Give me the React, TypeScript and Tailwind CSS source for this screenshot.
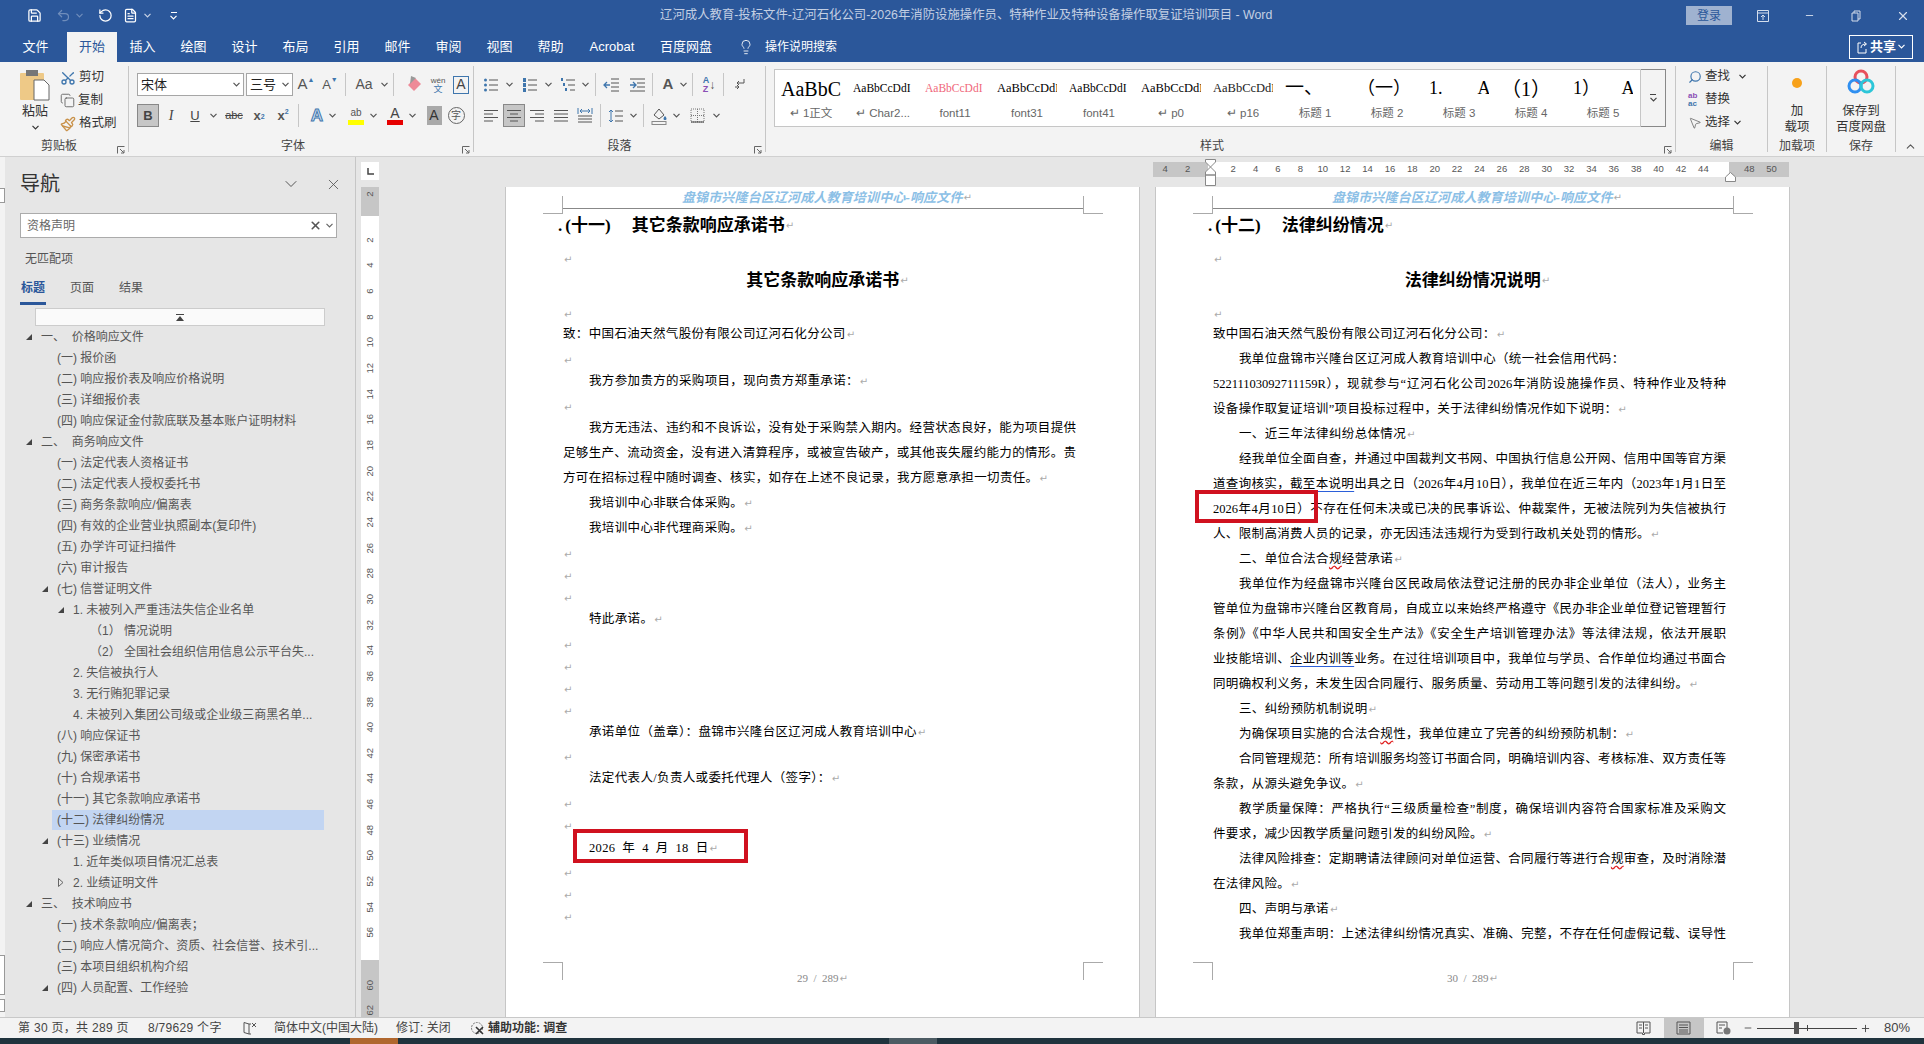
import type { ReactNode } from "react";
import {
  ChevronDown,
  Copy,
  FileText,
  Lightbulb,
  Minus,
  MousePointer2,
  Paintbrush,
  Plus,
  RotateCw,
  Save,
  Scissors,
  Search,
  Undo2,
  X,
} from "lucide-react";

const SERIF = "font-['Liberation_Serif','Noto_Sans_CJK_SC',serif]";

function Caret({ className = "text-[#555]" }: { className?: string }) {
  return (
    <svg width="7" height="5" viewBox="0 0 7 5" className={className}>
      <path d="M0.5 0.8 L3.5 3.8 L6.5 0.8" fill="none" stroke="currentColor" strokeWidth="1.2" />
    </svg>
  );
}

function Launcher() {
  return (
    <svg width="8" height="8" viewBox="0 0 8 8" className="text-[#666]">
      <path d="M0.5 7.5V0.5H7.5M3 3L7 7M7 4V7H4" fill="none" stroke="currentColor" />
    </svg>
  );
}

function Lines({ rows, color = "#555" }: { rows: [number, number][]; color?: string }) {
  return (
    <svg width="16" height="16" viewBox="0 0 16 16">
      {rows.map(([a, b], i) => (
        <path key={i} d={`M${a} ${2.5 + i * 3.5}H${b}`} stroke={color} strokeWidth="1" />
      ))}
    </svg>
  );
}

function Cell({ className, children }: { className: string; children?: ReactNode }) {
  return <div className={`flex h-[23px] shrink-0 items-center justify-center ${className}`}>{children}</div>;
}

function Sep({ className = "" }: { className?: string }) {
  return <div className={`h-[23px] w-px shrink-0 bg-[#c6c6c6] ${className}`} />;
}

function GroupLabel({ children, className = "" }: { children: ReactNode; className?: string }) {
  return (
    <div className={`relative mb-px flex h-[18px] items-center justify-center text-[12px] text-[#444] ${className}`}>
      {children}
    </div>
  );
}

function RibbonSep() {
  return <div className="my-[4px] h-[86px] w-px shrink-0 bg-[#c6c6c6]" />;
}

function TitleBar() {
  return (
    <div className="flex h-[31px] shrink-0 items-center bg-[#2b579a]">
      <div className="flex w-[660px] shrink-0 items-center">
        <Save size={15} className="ml-[27px] text-white" />
        <Undo2 size={15} className="ml-[14px] text-[#6f8dbb]" />
        <Caret className="ml-[5px] text-[#6f8dbb]" />
        <RotateCw size={15} className="ml-[15px] -scale-x-100 text-white" />
        <FileText size={15} className="ml-[10px] text-white" />
        <Caret className="ml-[6px] text-[#c8d3e6]" />
        <div className="ml-[19px] flex flex-col items-center gap-[2px]">
          <div className="h-px w-[6px] bg-white" />
          <Caret className="text-white" />
        </div>
      </div>
      <div className="text-[12.38px] whitespace-nowrap text-[#c3cfe3]">
        辽河成人教育-投标文件-辽河石化公司-2026年消防设施操作员、特种作业及特种设备操作取复证培训项目 - Word
      </div>
      <div className="ml-auto flex items-center">
        <div className="flex h-[19px] w-[46px] items-center justify-center bg-[#9fb2d0] text-[12px] text-[#2b579a]">
          登录
        </div>
        <svg width="14" height="14" viewBox="0 0 14 14" className="ml-[24px] text-[#d5deec]">
          <path d="M1.5 1.5H12.5V12.5H1.5ZM1.5 4H12.5M7 11V6M5 8L7 6L9 8" fill="none" stroke="currentColor" />
        </svg>
        <Minus size={11} className="ml-[34px] text-[#d5deec]" />
        <svg width="10" height="12" viewBox="0 0 10 12" className="ml-[36px] text-[#d5deec]">
          <path d="M1 3H7V11H1ZM3 3V1H9V9H7" fill="none" stroke="currentColor" />
        </svg>
        <X size={14} className="mr-[14px] ml-[35px] text-[#d5deec]" />
      </div>
    </div>
  );
}

const TABS = ["插入", "绘图", "设计", "布局", "引用", "邮件", "审阅", "视图", "帮助"];

function TabBar() {
  return (
    <div className="flex h-[31px] shrink-0 items-center bg-[#2b579a] pl-[10px] text-[13px] text-white">
      <div className="w-[51px] text-center">文件</div>
      <div className="ml-[6px] flex h-[30px] w-[50px] items-center justify-center self-end bg-[#f3f3f3] text-[#2b579a]">
        开始
      </div>
      {TABS.map((t) => (
        <div key={t} className="w-[51px] text-center">
          {t}
        </div>
      ))}
      <div className="w-[72px] text-center">Acrobat</div>
      <div className="w-[76px] text-center">百度网盘</div>
      <Lightbulb size={16} strokeWidth={1.3} className="ml-[14px]" />
      <div className="ml-[11px] text-[12px]">操作说明搜索</div>
      <div className="mr-[11px] ml-auto flex h-[24px] w-[64px] items-center justify-center gap-[2px] border border-white text-[13px] font-bold">
        <svg width="11" height="14" viewBox="0 0 11 14">
          <path d="M4 3H1V13H9V9M4 8C4 5 6 4 9 4M7 2L9.5 4L7 6" fill="none" stroke="white" />
        </svg>
        共享
        <Caret className="text-white" />
      </div>
    </div>
  );
}

function ClipboardGroup() {
  return (
    <div className="flex w-[128px] shrink-0 flex-col">
      <div className="flex flex-1">
        <div className="flex w-[60px] flex-col items-center pt-[7px] pl-[10px] text-[13px] text-[#333]">
          <svg width="32" height="32" viewBox="0 0 32 32">
            <rect x="1" y="4" width="24" height="27" rx="1" fill="#eec987" />
            <rect x="7" y="1" width="12" height="6" fill="#777" />
            <path d="M15 11H25L30 16V31H15Z" fill="white" stroke="#666" />
          </svg>
          <div className="mt-px leading-[18px]">粘贴</div>
          <Caret className="mt-[5px]" />
        </div>
        <div className="flex flex-col pt-[4px] text-[12.5px] text-[#333]">
          <div className="flex h-[23px] items-center gap-[3px]">
            <Scissors size={16} className="-rotate-90 text-[#3f76ad]" />
            剪切
          </div>
          <div className="flex h-[23px] items-center gap-[3px]">
            <Copy size={15} strokeWidth={1.3} className="text-[#555]" />
            复制
          </div>
          <div className="flex h-[23px] items-center gap-[3px]">
            <Paintbrush size={16} className="text-[#c9924a]" />
            格式刷
          </div>
        </div>
      </div>
      <GroupLabel className="pr-[10px]">
        剪贴板
        <span className="absolute right-[3px] bottom-[1px] flex">
          <Launcher />
        </span>
      </GroupLabel>
    </div>
  );
}

function FontGroup() {
  return (
    <div className="flex w-[344px] shrink-0 flex-col">
      <div className="flex flex-1 flex-col gap-[8px] pt-[11px] pl-[8px]">
        <div className="flex items-center">
          <div className={`flex h-[23px] w-[107px] items-center justify-between border border-[#a6a6a6] bg-white px-[3px] text-[13px] text-[#222] ${SERIF}`}>
            宋体
            <Caret />
          </div>
          <div className={`ml-[2px] flex h-[23px] w-[47px] items-center justify-between border border-[#a6a6a6] bg-white px-[3px] text-[13px] text-[#222] ${SERIF}`}>
            三号
            <Caret />
          </div>
          <Cell className="ml-px w-[24px] text-[15px] text-[#555]">
            A<span className="-mt-[8px] text-[7px] text-[#3f76ad]">▲</span>
          </Cell>
          <Cell className="w-[24px] text-[13px] text-[#555]">
            A<span className="-mt-[8px] text-[7px] text-[#3f76ad]">▼</span>
          </Cell>
          <Sep className="mx-[3px]" />
          <Cell className="w-[30px] text-[14px] text-[#555]">Aa</Cell>
          <Cell className="w-[10px]">
            <Caret />
          </Cell>
          <Sep className="mx-[4px]" />
          <Cell className="ml-[5px] w-[22px]">
            <svg width="16" height="18" viewBox="0 0 16 18">
              <path d="M2 9L9 2L15 8L8 15Z" fill="#ee8a98" />
              <path d="M5 0L10 2L4 8Z" fill="#999" />
            </svg>
          </Cell>
          <Cell className="ml-[2px] w-[22px]">
            <div className="flex flex-col items-center text-[8px] leading-[9px] text-[#555]">
              <span>wén</span>
              <span className="text-[9px] text-[#3f76ad]">文</span>
            </div>
          </Cell>
          <Cell className="ml-px w-[22px]">
            <div className="flex h-[18px] w-[16px] items-center justify-center border border-[#3f76ad] text-[14px] text-[#444]">
              A
            </div>
          </Cell>
        </div>
        <div className="flex items-center">
          <Cell className="w-[22px] border border-[#888] bg-[#c6c6c6] text-[13px] font-bold text-[#444]">B</Cell>
          <Cell className={`ml-px w-[22px] text-[14px] text-[#444] italic ${SERIF}`}>I</Cell>
          <Cell className="ml-[2px] w-[22px] text-[13px] text-[#444] underline">U</Cell>
          <Cell className="w-[14px]">
            <Caret />
          </Cell>
          <Cell className="ml-[3px] w-[22px] text-[11px] text-[#444] line-through">abc</Cell>
          <Cell className="ml-[3px] w-[22px] text-[13px] font-bold text-[#555]">
            x<sub className="text-[7px] text-[#3f76ad]">2</sub>
          </Cell>
          <Cell className="ml-[2px] w-[22px] text-[13px] font-bold text-[#555]">
            x<sup className="text-[7px] text-[#3f76ad]">2</sup>
          </Cell>
          <Sep className="mx-[4px]" />
          <Cell className="ml-[3px] w-[22px] text-[17px] font-bold text-[#cfe0f2] [-webkit-text-stroke:1px_#3f76ad]">A</Cell>
          <Cell className="w-[8px]">
            <Caret />
          </Cell>
          <Cell className="ml-[9px] w-[22px]">
            <div className="flex flex-col items-center">
              <span className="text-[10px] leading-[14px] text-[#555]">ab</span>
              <div className="h-[5px] w-[16px] bg-[#ffff00]" />
            </div>
          </Cell>
          <Cell className="w-[12px]">
            <Caret />
          </Cell>
          <Cell className="ml-[5px] w-[22px]">
            <div className="flex flex-col items-center">
              <span className="text-[14px] leading-[14px] text-[#444]">A</span>
              <div className="h-[5px] w-[16px] bg-[#e60000]" />
            </div>
          </Cell>
          <Cell className="w-[12px]">
            <Caret />
          </Cell>
          <Cell className="ml-[5px] w-[22px]">
            <div className="flex h-[19px] w-[15px] items-center justify-center bg-[#a9a9a9] text-[14px] text-[#333]">A</div>
          </Cell>
          <Cell className="w-[22px]">
            <div className="flex h-[17px] w-[17px] items-center justify-center rounded-full border border-[#666] text-[10px] text-[#555]">字</div>
          </Cell>
        </div>
      </div>
      <GroupLabel className="pr-[16px]">
        字体
        <span className="absolute right-[3px] bottom-[1px] flex">
          <Launcher />
        </span>
      </GroupLabel>
    </div>
  );
}

const LEFT: [number, number][] = [[1, 15], [1, 10], [1, 15], [1, 10]];
const CENTER: [number, number][] = [[1, 15], [4, 12], [1, 15], [4, 12]];
const RIGHT: [number, number][] = [[1, 15], [6, 15], [1, 15], [6, 15]];
const JUSTIFY: [number, number][] = [[1, 15], [1, 15], [1, 15], [1, 15]];

function ListIcon({ kind }: { kind: "dot" | "num" | "multi" }) {
  return (
    <svg width="16" height="16" viewBox="0 0 16 16">
      {[3, 8, 13].map((y, i) => (
        <g key={y}>
          {kind === "dot" && <circle cx={2.5} cy={y} r={1.5} fill="#3f76ad" />}
          {kind === "num" && <rect x={1} y={y - 2} width={3} height={4} fill="#3f76ad" />}
          {kind === "multi" && <rect x={1 + i * 2} y={y - 2} width={2} height={3} fill="#3f76ad" />}
          <path d={`M${kind === "multi" ? 6 + i * 2 : 6} ${y}H15`} stroke="#555" />
        </g>
      ))}
    </svg>
  );
}

function ParagraphGroup() {
  return (
    <div className="flex w-[291px] shrink-0 flex-col">
      <div className="flex flex-1 flex-col gap-[8px] pt-[11px] pl-[6px]">
        <div className="flex items-center">
          <Cell className="w-[22px]"><ListIcon kind="dot" /></Cell>
          <Cell className="w-[14px]"><Caret /></Cell>
          <Cell className="ml-[3px] w-[22px]"><ListIcon kind="num" /></Cell>
          <Cell className="w-[14px]"><Caret /></Cell>
          <Cell className="ml-[2px] w-[22px]"><ListIcon kind="multi" /></Cell>
          <Cell className="w-[12px]"><Caret /></Cell>
          <Sep className="mx-[4px]" />
          <Cell className="w-[22px]">
            <svg width="17" height="16" viewBox="0 0 17 16">
              <path d="M8 2H16M8 6H16M8 10H16M8 14H16" stroke="#555" />
              <path d="M7 8H1M4 5L1 8L4 11" fill="none" stroke="#3f76ad" strokeWidth="1.3" />
            </svg>
          </Cell>
          <Cell className="ml-[4px] w-[22px]">
            <svg width="17" height="16" viewBox="0 0 17 16">
              <path d="M1 2H16M8 6H16M8 10H16M1 14H16" stroke="#555" />
              <path d="M1 8H7M4 5L7 8L4 11" fill="none" stroke="#3f76ad" strokeWidth="1.3" />
            </svg>
          </Cell>
          <Sep className="mx-[4px]" />
          <Cell className="w-[22px] text-[15px] font-bold text-[#555]">A</Cell>
          <Cell className="w-[8px]"><Caret /></Cell>
          <Sep className="mx-[5px]" />
          <Cell className="w-[22px]">
            <div className="flex flex-col text-[9px] leading-[9px] font-bold">
              <span className="text-[#3f76ad]">A</span>
              <span className="text-[#8a4fb5]">Z</span>
            </div>
            <span className="text-[12px] text-[#555]">↓</span>
          </Cell>
          <Sep className="mx-[3px]" />
          <Cell className="ml-[2px] w-[22px]">
            <svg width="12" height="14" viewBox="0 0 12 14">
              <path d="M10 1V5H3M5 3L3 5L5 7M1 9H5M3 11L5 9L3 7" fill="none" stroke="#555" />
            </svg>
          </Cell>
        </div>
        <div className="flex items-center">
          <Cell className="w-[22px]"><Lines rows={LEFT} /></Cell>
          <Cell className="ml-px w-[22px] border border-[#888] bg-[#c6c6c6]"><Lines rows={CENTER} /></Cell>
          <Cell className="ml-px w-[22px]"><Lines rows={RIGHT} /></Cell>
          <Cell className="ml-[2px] w-[22px]"><Lines rows={JUSTIFY} /></Cell>
          <Cell className="ml-[2px] w-[22px]">
            <svg width="16" height="17" viewBox="0 0 16 17">
              <path d="M1 1V7M15 1V7M3 4H13M5 2L3 4L5 6M11 2L13 4L11 6" fill="none" stroke="#3f76ad" />
              <path d="M1 9H15M1 12H15M1 15H15" stroke="#555" />
            </svg>
          </Cell>
          <Sep className="mx-[4px]" />
          <Cell className="w-[22px]">
            <svg width="16" height="16" viewBox="0 0 16 16">
              <path d="M3 2V14M1 4L3 2L5 4M1 12L3 14L5 12" fill="none" stroke="#3f76ad" />
              <path d="M7 3H15M7 8H15M7 13H15" stroke="#555" />
            </svg>
          </Cell>
          <Cell className="w-[12px]"><Caret /></Cell>
          <Sep className="mx-[4px]" />
          <Cell className="w-[22px]">
            <svg width="17" height="18" viewBox="0 0 17 18">
              <path d="M3 8L8 2L13 8L8 12Z" fill="none" stroke="#555" />
              <path d="M14 9C16 11 16 13 14 13C12 13 12 11 14 9Z" fill="#3f76ad" />
              <rect x="1" y="14.5" width="14" height="3" fill="#f3f3f3" stroke="#888" />
            </svg>
          </Cell>
          <Cell className="w-[12px]"><Caret /></Cell>
          <Cell className="ml-[4px] w-[22px]">
            <svg width="15" height="15" viewBox="0 0 15 15">
              <path d="M1 1H14V14H1ZM7.5 1V14M1 7.5H14" fill="none" stroke="#777" strokeDasharray="1 1" />
              <path d="M1 14H14" stroke="#444" />
            </svg>
          </Cell>
          <Cell className="ml-[2px] w-[12px]"><Caret /></Cell>
        </div>
      </div>
      <GroupLabel>
        段落
        <span className="absolute right-[3px] bottom-[1px] flex">
          <Launcher />
        </span>
      </GroupLabel>
    </div>
  );
}

const STYLES: { preview: string; label: string; cls: string }[] = [
  { preview: "AaBbC", label: "↵ 1正文", cls: "text-[20px] text-black" },
  { preview: "AaBbCcDdI", label: "↵ Char2...", cls: "text-[11.5px] text-black" },
  { preview: "AaBbCcDdI", label: "font11", cls: "text-[11.5px] text-[#f0677a]" },
  { preview: "AaBbCcDdE", label: "font31", cls: "text-[12.5px] text-black" },
  { preview: "AaBbCcDdI", label: "font41", cls: "text-[11.5px] text-black" },
  { preview: "AaBbCcDdE", label: "↵ p0", cls: "text-[12.5px] text-black" },
  { preview: "AaBbCcDdE", label: "↵ p16", cls: "text-[12.5px] text-[#222]" },
  { preview: "一、", label: "标题 1", cls: "text-[19px] text-black" },
  { preview: "（一）", label: "标题 2", cls: "text-[18px] text-black" },
  { preview: "1.        Aa", label: "标题 3", cls: "text-[18px] text-black" },
  { preview: "（1）", label: "标题 4", cls: "text-[20px] text-black" },
  { preview: "1）     Aa", label: "标题 5", cls: "text-[18px] text-black" },
];

function StylesGroup() {
  return (
    <div className="flex w-[909px] shrink-0 flex-col">
      <div className="flex flex-1 pt-[7px] pl-[8px]">
        <div className="flex h-[58px] w-[867px] border border-[#c6c6c6] bg-white">
          {STYLES.map((s) => (
            <div key={s.label} className="flex h-full w-[72px] shrink-0 flex-col items-start px-[6px]">
              <div className={`flex h-[37px] w-[60px] items-center overflow-hidden whitespace-pre ${SERIF} ${s.cls}`}>
                {s.preview}
              </div>
              <div className="-mt-[2px] w-full text-center text-[11.5px] whitespace-nowrap text-[#666]">{s.label}</div>
            </div>
          ))}
        </div>
        <div className="flex h-[58px] w-[25px] items-center justify-center border border-l-0 border-[#888] bg-[#f3f3f3]">
          <div className="flex flex-col items-center gap-[2px]">
            <div className="h-px w-[6px] bg-[#444]" />
            <Caret className="text-[#444]" />
          </div>
        </div>
      </div>
      <GroupLabel className="pr-[17px]">
        样式
        <span className="absolute right-[3px] bottom-[1px] flex">
          <Launcher />
        </span>
      </GroupLabel>
    </div>
  );
}

function EditGroup() {
  return (
    <div className="flex w-[91px] shrink-0 flex-col">
      <div className="flex flex-1 flex-col pt-[3px] pl-[12px] text-[12.5px] text-[#333]">
        <div className="flex h-[23px] items-center gap-[3px]">
          <Search size={14} className="-scale-x-100 text-[#3f76ad]" />
          查找
          <Caret className="ml-[6px]" />
        </div>
        <div className="flex h-[23px] items-center gap-[3px]">
          <div className="flex w-[14px] flex-col text-[8px] leading-[8px] font-bold">
            <span className="text-[#8a4fb5]">ab</span>
            <span className="text-[#3f76ad]">ac</span>
          </div>
          替换
        </div>
        <div className="flex h-[23px] items-center gap-[3px]">
          <MousePointer2 size={14} strokeWidth={1.2} className="text-[#555]" />
          选择
          <Caret className="ml-px" />
        </div>
      </div>
      <GroupLabel>编辑</GroupLabel>
    </div>
  );
}

function AddinGroup() {
  return (
    <div className="flex w-[58px] shrink-0 flex-col">
      <div className="flex flex-1 flex-col items-center pt-[16px] text-[12.5px] leading-[16px] text-[#333]">
        <div className="h-[10px] w-[10px] rounded-full bg-[#f7a11a] blur-[0.5px]" />
        <div className="mt-[15px]">加</div>
        <div>载项</div>
      </div>
      <GroupLabel>加载项</GroupLabel>
    </div>
  );
}

function SaveGroup() {
  return (
    <div className="flex w-[68px] shrink-0 flex-col">
      <div className="flex flex-1 flex-col items-center pt-[6px] text-[12.5px] leading-[16px] text-[#333]">
        <svg width="28" height="28" viewBox="0 0 28 28">
          <circle cx="14" cy="9" r="6" fill="none" stroke="#e8505b" strokeWidth="3" />
          <circle cx="8" cy="18" r="6" fill="none" stroke="#2f8ff0" strokeWidth="3" />
          <circle cx="20" cy="18" r="6" fill="none" stroke="#2cc6d8" strokeWidth="3" />
        </svg>
        <div className="mt-[7px]">保存到</div>
        <div>百度网盘</div>
      </div>
      <GroupLabel>保存</GroupLabel>
    </div>
  );
}

function Ribbon() {
  return (
    <div className="flex h-[95px] shrink-0 border-b border-[#d0d0d0] bg-[#f3f3f3]">
      <ClipboardGroup />
      <RibbonSep />
      <FontGroup />
      <RibbonSep />
      <ParagraphGroup />
      <RibbonSep />
      <StylesGroup />
      <RibbonSep />
      <EditGroup />
      <RibbonSep />
      <AddinGroup />
      <RibbonSep />
      <SaveGroup />
      <RibbonSep />
      <div className="flex flex-1 items-end justify-center pb-[3px]">
        <ChevronDown size={13} className="rotate-180 text-[#555]" />
      </div>
    </div>
  );
}

type TreeRow = { level: 0 | 1 | 2 | 3; text: string; arrow?: "open" | "closed"; selected?: boolean };

const TREE: TreeRow[] = [
  { level: 0, text: "一、  价格响应文件", arrow: "open" },
  { level: 1, text: "(一) 报价函" },
  { level: 1, text: "(二) 响应报价表及响应价格说明" },
  { level: 1, text: "(三) 详细报价表" },
  { level: 1, text: "(四) 响应保证金付款底联及基本账户证明材料" },
  { level: 0, text: "二、  商务响应文件", arrow: "open" },
  { level: 1, text: "(一) 法定代表人资格证书" },
  { level: 1, text: "(二) 法定代表人授权委托书" },
  { level: 1, text: "(三) 商务条款响应/偏离表" },
  { level: 1, text: "(四) 有效的企业营业执照副本(复印件)" },
  { level: 1, text: "(五) 办学许可证扫描件" },
  { level: 1, text: "(六) 审计报告" },
  { level: 1, text: "(七) 信誉证明文件", arrow: "open" },
  { level: 2, text: "1. 未被列入严重违法失信企业名单", arrow: "open" },
  { level: 3, text: "（1） 情况说明" },
  { level: 3, text: "（2） 全国社会组织信用信息公示平台失..." },
  { level: 2, text: "2. 失信被执行人" },
  { level: 2, text: "3. 无行贿犯罪记录" },
  { level: 2, text: "4. 未被列入集团公司级或企业级三商黑名单..." },
  { level: 1, text: "(八) 响应保证书" },
  { level: 1, text: "(九) 保密承诺书" },
  { level: 1, text: "(十) 合规承诺书" },
  { level: 1, text: "(十一) 其它条款响应承诺书" },
  { level: 1, text: "(十二) 法律纠纷情况", selected: true },
  { level: 1, text: "(十三) 业绩情况", arrow: "open" },
  { level: 2, text: "1. 近年类似项目情况汇总表" },
  { level: 2, text: "2. 业绩证明文件", arrow: "closed" },
  { level: 0, text: "三、  技术响应书", arrow: "open" },
  { level: 1, text: "(一) 技术条款响应/偏离表；" },
  { level: 1, text: "(二) 响应人情况简介、资质、社会信誉、技术引..." },
  { level: 1, text: "(三) 本项目组织机构介绍" },
  { level: 1, text: "(四) 人员配置、工作经验", arrow: "open" },
];

const INDENT = ["pl-[21px]", "pl-[37px]", "pl-[53px]", "pl-[70px]"];

function NavPane() {
  return (
    <div className="flex w-[351px] shrink-0 flex-col border-r border-[#c6c6c6] text-[12px] text-[#555]">
      <div className="mt-[13px] flex h-[28px] items-center pl-[15px]">
        <span className="text-[20px] text-[#333]">导航</span>
        <ChevronDown size={20} strokeWidth={1.2} className="ml-[221px]" />
        <X size={17} strokeWidth={1.2} className="ml-[24px]" />
      </div>
      <div className="mt-[15px] ml-[15px] flex h-[25px] w-[317px] items-center border border-[#ababab] bg-white pl-[6px] text-[12px] text-[#666]">
        资格声明
        <X size={13} strokeWidth={3} className="ml-auto text-[#555]" />
        <Caret className="mr-[3px] ml-[4px]" />
      </div>
      <div className="mt-[11px] flex h-[20px] items-center pl-[20px]">无匹配项</div>
      <div className="mt-[9px] flex h-[20px] items-center pl-[16px]">
        <span className="font-bold text-[#2b579a]">标题</span>
        <span className="ml-[25px]">页面</span>
        <span className="ml-[25px]">结果</span>
      </div>
      <div className="mt-[4px] ml-[15px] h-[3px] w-[26px] bg-[#2b579a]" />
      <div className="mt-[3px] ml-[30px] flex h-[18px] w-[290px] items-center justify-center border border-[#ccc] bg-[#fafafa]">
        <svg width="8" height="7" viewBox="0 0 8 7">
          <path d="M0 0H8V1H0ZM4 2L8 7H0Z" fill="#444" />
        </svg>
      </div>
      <div className="flex flex-col">
        {TREE.map((r, i) => {
          const arrow = (
            <span className="flex w-[15px] shrink-0">
              {r.arrow === "open" && (
                <svg width="6" height="6" viewBox="0 0 6 6">
                  <path d="M6 0V6H0Z" fill="#444" />
                </svg>
              )}
              {r.arrow === "closed" && (
                <svg width="6" height="9" viewBox="0 0 6 9">
                  <path d="M0.5 0.5L5 4.5L0.5 8.5Z" fill="none" stroke="#666" />
                </svg>
              )}
            </span>
          );
          if (r.selected) {
            return (
              <div key={i} className="flex h-[21px] items-center">
                <div className="ml-[47px] flex h-[20px] w-[272px] items-center bg-[#c2d5f2] pl-[5px] whitespace-pre">
                  {r.text}
                </div>
              </div>
            );
          }
          return (
            <div key={i} className={`flex h-[21px] items-center whitespace-pre ${INDENT[r.level]}`}>
              {arrow}
              {r.text}
            </div>
          );
        })}
      </div>
    </div>
  );
}

const V_NUMS = Array.from({ length: 28 }, (_, i) => (i + 1) * 2);

function VerticalRuler() {
  return (
    <div className="ml-[5px] flex w-[18px] shrink-0 flex-col text-[9.5px] text-[#555]">
      <div className="mt-[5px] flex h-[18px] w-[18px] items-center justify-center bg-white">
        <svg width="7" height="7" viewBox="0 0 7 7">
          <path d="M1 0V6H7" fill="none" stroke="#444" strokeWidth="1.5" />
        </svg>
      </div>
      <div className="mt-[7px] flex h-[29px] items-start justify-center bg-[#c6c6c6]">
        <span className="-rotate-90">2</span>
      </div>
      <div className="flex h-[744px] flex-col bg-white pt-[11px]">
        {V_NUMS.map((n) => (
          <div key={n} className="flex h-[25.67px] shrink-0 items-center justify-center">
            <span className="-rotate-90">{n}</span>
          </div>
        ))}
      </div>
      <div className="flex flex-1 flex-col overflow-hidden bg-[#c6c6c6] pt-[12px]">
        <div className="flex h-[25.67px] shrink-0 items-center justify-center">
          <span className="-rotate-90">60</span>
        </div>
        <div className="flex h-[25.67px] shrink-0 items-center justify-center">
          <span className="-rotate-90">62</span>
        </div>
      </div>
    </div>
  );
}

const H_NUMS = Array.from({ length: 22 }, (_, i) => (i + 1) * 2);

function HorizontalRuler() {
  return (
    <div className="relative ml-[774px] flex h-[15px] w-[636px] text-[9.5px] text-[#555]">
      <div className="flex w-[55px] items-center bg-[#c6c6c6] pl-px">
        <span className="w-[22.4px] text-center">4</span>
        <span className="w-[22.4px] text-center">2</span>
      </div>
      <div className="flex w-[521px] items-center bg-white pl-[14px]">
        {H_NUMS.map((n) => (
          <span key={n} className="w-[22.4px] shrink-0 text-center">
            {n}
          </span>
        ))}
      </div>
      <div className="flex w-[60px] items-center bg-[#c6c6c6] pl-[9px]">
        <span className="w-[22.4px] text-center">48</span>
        <span className="w-[22.4px] text-center">50</span>
      </div>
      <svg width="11" height="27" viewBox="0 0 11 27" className="absolute top-[-3px] left-[52px]">
        <path d="M0.5 0.5H10.5V3L5.5 8L0.5 3Z M5.5 8L10.5 13V16H0.5V13Z M0.5 16H10.5V26.5H0.5Z" fill="#fff" stroke="#888" />
      </svg>
      <svg width="11" height="10" viewBox="0 0 11 10" className="absolute top-[10px] left-[572px]">
        <path d="M5.5 0.5L10.5 5V9.5H0.5V5Z" fill="#fff" stroke="#888" />
      </svg>
    </div>
  );
}

function Mark() {
  return <span className="ml-px font-['DejaVu_Sans',sans-serif] text-[10px] font-normal text-[#aaa] no-underline">↵</span>;
}

type Line = {
  h: string;
  text?: ReactNode;
  indent?: boolean;
  justify?: boolean;
  mark?: boolean;
  kind?: "heading" | "title";
};

function Row({ line }: { line: Line }) {
  if (line.kind === "heading") {
    return (
      <div className={`flex whitespace-pre ${line.h}`}>
        <div className="-ml-[5px] flex h-[22px] items-center text-[17px] leading-[22px] font-bold text-black">
          <span className="mr-[3px]">.</span>
          {line.text}
          <Mark />
        </div>
      </div>
    );
  }
  if (line.kind === "title") {
    return (
      <div className={`flex justify-center pl-[16px] ${line.h}`}>
        <div className="flex h-[22px] items-center text-[17px] leading-[22px] font-bold text-black">
          {line.text}
          <Mark />
        </div>
      </div>
    );
  }
  if (!line.text) {
    return (
      <div className={`leading-[22px] ${line.h}`}>
        <Mark />
      </div>
    );
  }
  const align = line.justify ? "text-justify [text-align-last:justify]" : "tracking-[0.35px]";
  return (
    <div className={`text-[12.5px] leading-[22px] text-black ${line.h} ${line.indent ? "indent-[26px]" : ""} ${align}`}>
      {line.text}
      {line.mark && <Mark />}
    </div>
  );
}

const BLANK22: Line = { h: "h-[22px]" };

const PAGE_ONE: Line[] = [
  { h: "h-[32px]", kind: "heading", text: "(十一)     其它条款响应承诺书" },
  { h: "h-[23px]" },
  { h: "h-[32px]", kind: "title", text: "其它条款响应承诺书" },
  { h: "h-[21px]" },
  { h: "h-[25px]", text: "致：中国石油天然气股份有限公司辽河石化分公司", mark: true },
  BLANK22,
  { h: "h-[25px]", indent: true, text: "我方参加贵方的采购项目，现向贵方郑重承诺：", mark: true },
  BLANK22,
  { h: "h-[25px]", indent: true, justify: true, text: "我方无违法、违约和不良诉讼，没有处于采购禁入期内。经营状态良好，能为项目提供" },
  { h: "h-[25px]", justify: true, text: "足够生产、流动资金，没有进入清算程序，或被宣告破产，或其他丧失履约能力的情形。贵" },
  { h: "h-[25px]", text: "方可在招标过程中随时调查、核实，如存在上述不良记录，我方愿意承担一切责任。", mark: true },
  { h: "h-[25px]", indent: true, text: "我培训中心非联合体采购。", mark: true },
  { h: "h-[25px]", indent: true, text: "我培训中心非代理商采购。", mark: true },
  BLANK22,
  BLANK22,
  BLANK22,
  { h: "h-[25px]", indent: true, text: "特此承诺。", mark: true },
  BLANK22,
  BLANK22,
  BLANK22,
  BLANK22,
  { h: "h-[24px]", indent: true, text: "承诺单位（盖章）：盘锦市兴隆台区辽河成人教育培训中心", mark: true },
  BLANK22,
  { h: "h-[25px]", indent: true, text: "法定代表人/负责人或委托代理人（签字）：", mark: true },
  BLANK22,
  { h: "h-[23px]" },
  { h: "h-[24px]", indent: true, text: <span className="whitespace-pre">2026  年  4  月  18  日</span>, mark: true },
  BLANK22,
  BLANK22,
  BLANK22,
];

function T(text: ReactNode, opts: Partial<Line> = {}): Line {
  return { h: "h-[25px]", text, ...opts };
}

const BLUE = "underline decoration-[#2b5fd9] underline-offset-[3px]";
const WAVY = "underline decoration-wavy decoration-[#e02020] underline-offset-[2px]";
const IJ = { indent: true, justify: true };
const IM = { indent: true, mark: true };

const PAGE_TWO: Line[] = [
  { h: "h-[32px]", kind: "heading", text: "(十二)     法律纠纷情况" },
  { h: "h-[23px]" },
  { h: "h-[32px]", kind: "title", text: "法律纠纷情况说明" },
  { h: "h-[21px]" },
  T("致中国石油天然气股份有限公司辽河石化分公司：", { mark: true }),
  T("我单位盘锦市兴隆台区辽河成人教育培训中心（统一社会信用代码：", { indent: true }),
  T("52211103092711159R），现就参与“辽河石化公司2026年消防设施操作员、特种作业及特种", { justify: true }),
  T("设备操作取复证培训”项目投标过程中，关于法律纠纷情况作如下说明：", { mark: true }),
  T("一、近三年法律纠纷总体情况", IM),
  T("经我单位全面自查，并通过中国裁判文书网、中国执行信息公开网、信用中国等官方渠", IJ),
  T(
    <>
      道查询核实，截至<span className={BLUE}>本说明</span>出具之日（2026年4月10日），我单位在近三年内（2023年1月1日至
    </>,
    { justify: true },
  ),
  T("2026年4月10日）不存在任何未决或已决的民事诉讼、仲裁案件，无被法院列为失信被执行", { justify: true }),
  T("人、限制高消费人员的记录，亦无因违法违规行为受到行政机关处罚的情形。", { mark: true }),
  T(
    <>
      二、单位合法合<span className={WAVY}>规</span>经营承诺
    </>,
    IM,
  ),
  T("我单位作为经盘锦市兴隆台区民政局依法登记注册的民办非企业单位（法人），业务主", IJ),
  T("管单位为盘锦市兴隆台区教育局，自成立以来始终严格遵守《民办非企业单位登记管理暂行", { justify: true }),
  T("条例》《中华人民共和国安全生产法》《安全生产培训管理办法》等法律法规，依法开展职", { justify: true }),
  T(
    <>
      业技能培训、<span className={BLUE}>企业内训等</span>业务。在过往培训项目中，我单位与学员、合作单位均通过书面合
    </>,
    { justify: true },
  ),
  T("同明确权利义务，未发生因合同履行、服务质量、劳动用工等问题引发的法律纠纷。", { mark: true }),
  T("三、纠纷预防机制说明", IM),
  T(
    <>
      为确保项目实施的合法合<span className={WAVY}>规</span>性，我单位建立了完善的纠纷预防机制：
    </>,
    IM,
  ),
  T("合同管理规范：所有培训服务均签订书面合同，明确培训内容、考核标准、双方责任等", IJ),
  T("条款，从源头避免争议。", { mark: true }),
  T("教学质量保障：严格执行“三级质量检查”制度，确保培训内容符合国家标准及采购文", IJ),
  T("件要求，减少因教学质量问题引发的纠纷风险。", { mark: true }),
  T(
    <>
      法律风险排查：定期聘请法律顾问对单位运营、合同履行等进行合<span className={WAVY}>规</span>审查，及时消除潜
    </>,
    IJ,
  ),
  T("在法律风险。", { mark: true }),
  T("四、声明与承诺", IM),
  T("我单位郑重声明：上述法律纠纷情况真实、准确、完整，不存在任何虚假记载、误导性", IJ),
];

function Page({ lines, footer, children }: { lines: Line[]; footer: string; children?: ReactNode }) {
  return (
    <div className={`relative flex h-[830px] w-[635px] shrink-0 flex-col border-x border-[#c6c6c6] bg-white ${SERIF}`}>
      <div className="absolute top-[9px] left-[37px] h-[18px] w-[20px] border-r border-b border-[#aaa]" />
      <div className="absolute top-[9px] left-[577px] h-[18px] w-[20px] border-b border-l border-[#aaa]" />
      <div className="absolute top-[775px] left-[37px] h-[18px] w-[20px] border-t border-r border-[#aaa]" />
      <div className="absolute top-[775px] left-[577px] h-[18px] w-[20px] border-t border-l border-[#aaa]" />
      <div className="mx-[56px] flex h-[22px] w-[522px] items-center justify-center border-b border-[#888] pl-[8px] text-[13px] font-bold tracking-[0.15px] text-[#8cc0e6] italic">
        盘锦市兴隆台区辽河成人教育培训中心-响应文件
        <Mark />
      </div>
      <div className="mt-[6px] ml-[57px] flex w-[513px] flex-col">
        {lines.map((l, i) => (
          <Row key={i} line={l} />
        ))}
      </div>
      <div className="mt-auto mb-[32px] flex h-[14px] items-center justify-center text-[11px] text-[#888]">
        <span className="whitespace-pre">{footer}</span>
        <Mark />
      </div>
      {children}
    </div>
  );
}

function Document() {
  return (
    <div className="flex min-w-0 flex-1 flex-col">
      <div className="h-[30px] shrink-0 pt-[5px]">
        <HorizontalRuler />
      </div>
      <div className="flex gap-[15px] pl-[126px]">
        <Page lines={PAGE_ONE} footer="29  /  289">
          <div className="absolute top-[642px] left-[67px] h-[34px] w-[175px] border-4 border-[#d0111f]" />
        </Page>
        <Page lines={PAGE_TWO} footer="30  /  289">
          <div className="absolute top-[303px] left-[39px] h-[33px] w-[123px] border-4 border-[#d0111f]" />
        </Page>
      </div>
    </div>
  );
}

function StatusBar() {
  return (
    <div className="flex h-[21px] shrink-0 items-center border-t border-[#c8c8c8] bg-[#f3f3f3] pl-[18px] text-[12px] whitespace-nowrap text-[#444]">
      <span className="w-[130px] tracking-[0.3px]">第 30 页，共 289 页</span>
      <span className="w-[95px] tracking-[0.3px]">8/79629 个字</span>
      <svg width="14" height="14" viewBox="0 0 14 14">
        <path d="M1 1.5L6 3V13L1 11.5ZM6 3H8M6 13H8" fill="none" stroke="#555" />
        <path d="M9 2L13 6M13 2L9 6" stroke="#555" />
      </svg>
      <span className="ml-[17px] w-[122px]">简体中文(中国大陆)</span>
      <span className="w-[74px]">修订: 关闭</span>
      <svg width="16" height="16" viewBox="0 0 16 16">
        <circle cx="7" cy="8" r="5.5" fill="none" stroke="#777" strokeDasharray="2 1" />
        <path d="M6 7L13 14M13 7L6 14" stroke="#333" strokeWidth="1.6" />
      </svg>
      <span className="ml-[2px] font-bold text-[#333]">辅助功能: 调查</span>
      <div className="ml-auto flex h-full items-center">
        <svg width="15" height="14" viewBox="0 0 15 14">
          <path d="M1 1H14V12H8.5V13.5H6.5V12H1ZM7.5 1V12M3 4H6M3 7H6M9 4H12M9 7H12" fill="none" stroke="#555" />
        </svg>
        <div className="ml-[13px] flex h-full w-[40px] items-center justify-center bg-[#c6c6c6]">
          <svg width="15" height="14" viewBox="0 0 15 14">
            <path d="M1 1H14V13H1ZM3 4H12M3 6.5H12M3 9H12M3 11H12" fill="none" stroke="#555" />
          </svg>
        </div>
        <svg width="15" height="14" viewBox="0 0 15 14" className="ml-[12px]">
          <path d="M1 1H11V7M1 1V12H7M3 4H9M3 7H6" fill="none" stroke="#555" />
          <circle cx="11" cy="10" r="3.5" fill="#777" />
        </svg>
        <Minus size={10} className="ml-[12px] text-[#444]" />
        <div className="relative ml-[4px] flex h-[12px] w-[100px] items-center">
          <div className="h-px w-full bg-[#444]" />
          <div className="absolute top-0 left-[37px] h-[12px] w-[5px] bg-[#555]" />
          <div className="absolute top-[3px] left-[50px] h-[6px] w-px bg-[#444]" />
        </div>
        <Plus size={11} className="ml-[3px] text-[#444]" />
        <span className="mr-[14px] ml-[13px] text-[13px]">80%</span>
      </div>
    </div>
  );
}

function Taskbar() {
  return (
    <div className="flex h-[6px] shrink-0 bg-[#1f333d]">
      <div className="ml-[350px] w-[48px] bg-[#b0672e]" />
      <div className="ml-[491px] w-[48px] bg-[#4c5b63]" />
    </div>
  );
}

export default function App() {
  return (
    <div className="flex h-[1044px] w-[1924px] flex-col overflow-hidden bg-[#e6e6e6] font-['Liberation_Sans','Noto_Sans_CJK_SC',sans-serif]">
      <TitleBar />
      <TabBar />
      <Ribbon />
      <div className="flex min-h-0 flex-1 bg-[#e6e6e6]">
        <div className="flex w-[5px] shrink-0 flex-col bg-[#f3f3f3]">
          <div className="mt-[31px] h-[15px] border border-l-0 border-[#999] bg-white" />
          <div className="mt-[752px] h-[40px] border border-l-0 border-[#999] bg-white" />
          <div className="mt-[4px] h-[13px] border border-l-0 border-[#999] bg-white" />
        </div>
        <NavPane />
        <VerticalRuler />
        <Document />
      </div>
      <StatusBar />
      <Taskbar />
    </div>
  );
}
